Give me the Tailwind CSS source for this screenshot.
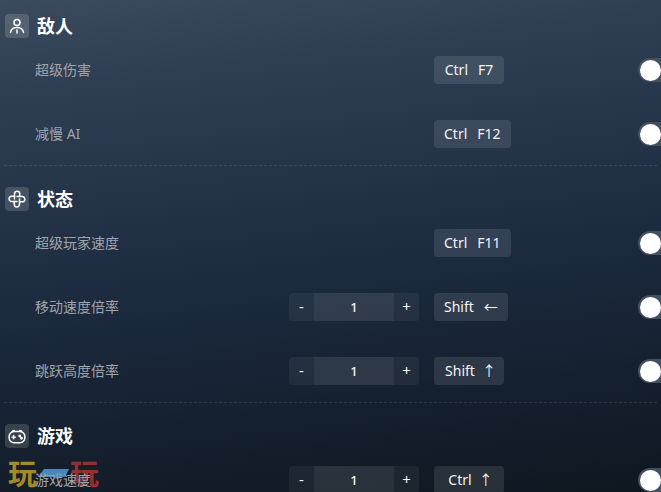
<!DOCTYPE html>
<html lang="zh">
<head>
<meta charset="UTF-8">
<title>Trainer</title>
<script src="https://cdn.jsdelivr.net/npm/@tailwindcss/browser@4"></script>
</head>
<body class="h-[492px] overflow-hidden bg-[linear-gradient(173deg,#3b4a5c_0%,#2b3b50_22%,#1c2a3f_55%,#0f1720_100%)] font-['Noto_Sans','Noto_Sans_CJK_SC',sans-serif]">
<div class="relative h-[492px] w-[661px] overflow-hidden pt-[14px]">

    <!-- watermark -->
    <div class="absolute left-[8px] top-[456px] flex items-center font-['Noto_Sans_CJK_SC',sans-serif] text-[29px] font-bold leading-[33px]">
        <span class="text-[#a68a25]">玩</span>
        <svg class="mx-px h-2 w-[31px]" viewBox="0 0 31 8"><polygon points="0,8 6,0 31,0 27,8" fill="#4a86b8"/></svg>
        <span class="text-[#93312f]">玩</span>
    </div>

    <!-- 敌人 -->
    <section class="relative">
        <div class="flex h-6 items-center gap-2 pl-[5px]">
            <span class="flex h-6 w-6 items-center justify-center rounded bg-white/15">
                <svg class="h-4 w-4" viewBox="0 0 16 16" fill="none" stroke="white" stroke-width="1.5" stroke-linecap="round">
                    <circle cx="8" cy="4.500" r="3"/>
                    <path d="M1.500 14.500C2 11 4.500 9.500 8 9.500s6 1.500 6.500 5M8 12v3"/>
                </svg>
            </span>
            <span class="text-lg font-bold leading-6 text-white">敌人</span>
        </div>
        <div class="flex h-16 items-center pl-[35px] text-sm text-[#a0a5ab]">
            <span class="flex-1">超级伤害</span>
            <div class="w-[204px] shrink-0"><span class="inline-flex h-7 min-w-[70px] items-center justify-center gap-2.5 rounded bg-white/10 px-2.5 text-sm text-gray-100"><span>Ctrl</span><span>F7</span></span></div>
            <span class="flex h-6 w-[23px] shrink-0 items-center rounded-l-full bg-[#44505f] pl-[2px]"><i class="h-[21px] w-[21px] shrink-0 rounded-full bg-white"></i></span>
        </div>
        <div class="flex h-16 items-center pl-[35px] text-sm text-[#a0a5ab]">
            <span class="flex-1">减慢 AI</span>
            <div class="w-[204px] shrink-0"><span class="inline-flex h-7 min-w-[70px] items-center justify-center gap-2.5 rounded bg-white/10 px-2.5 text-sm text-gray-100"><span>Ctrl</span><span>F12</span></span></div>
            <span class="flex h-6 w-[23px] shrink-0 items-center rounded-l-full bg-[#44505f] pl-[2px]"><i class="h-[21px] w-[21px] shrink-0 rounded-full bg-white"></i></span>
        </div>
    </section>

    <div class="mx-[4px] -mt-px border-t border-dashed border-white/10"></div>

    <!-- 状态 -->
    <section class="relative mt-[21px]">
        <div class="flex h-6 items-center gap-2 pl-[5px]">
            <span class="flex h-6 w-6 items-center justify-center rounded bg-white/15">
                <svg class="h-5 w-5" viewBox="0 0 16 16" fill="none" stroke="white" stroke-width="1.200" stroke-linecap="round">
                    <path d="M6 8V3.800a2.100 2.100 0 0 1 4.200 0V6"/>
                    <path transform="rotate(90 8 8)" d="M6 8V3.800a2.100 2.100 0 0 1 4.200 0V6"/>
                    <path transform="rotate(180 8 8)" d="M6 8V3.800a2.100 2.100 0 0 1 4.200 0V6"/>
                    <path transform="rotate(270 8 8)" d="M6 8V3.800a2.100 2.100 0 0 1 4.200 0V6"/>
                </svg>
            </span>
            <span class="text-lg font-bold leading-6 text-white">状态</span>
        </div>
        <div class="flex h-16 items-center pl-[35px] text-sm text-[#a0a5ab]">
            <span class="flex-1">超级玩家速度</span>
            <div class="w-[204px] shrink-0"><span class="inline-flex h-7 min-w-[70px] items-center justify-center gap-2.5 rounded bg-white/10 px-2.5 text-sm text-gray-100"><span>Ctrl</span><span>F11</span></span></div>
            <span class="flex h-6 w-[23px] shrink-0 items-center rounded-l-full bg-[#44505f] pl-[2px]"><i class="h-[21px] w-[21px] shrink-0 rounded-full bg-white"></i></span>
        </div>
        <div class="flex h-16 items-center pl-[35px] text-sm text-[#a0a5ab]">
            <span class="flex-1">移动速度倍率</span>
            <div class="mr-[15px] flex h-7 w-[130px] shrink-0 overflow-hidden rounded text-[15px] text-gray-100">
                <span class="flex w-[25px] items-center justify-center bg-white/5">-</span>
                <span class="flex w-20 items-center justify-center bg-white/10 text-[13px] font-medium">1</span>
                <span class="flex w-[25px] items-center justify-center bg-white/5">+</span>
            </div>
            <div class="w-[204px] shrink-0"><span class="inline-flex h-7 min-w-[70px] items-center justify-center gap-2.5 rounded bg-white/10 px-2.5 text-sm text-gray-100"><span>Shift</span><span class="flex w-[14px] justify-center">←</span></span></div>
            <span class="flex h-6 w-[23px] shrink-0 items-center rounded-l-full bg-[#44505f] pl-[2px]"><i class="h-[21px] w-[21px] shrink-0 rounded-full bg-white"></i></span>
        </div>
        <div class="flex h-16 items-center pl-[35px] text-sm text-[#a0a5ab]">
            <span class="flex-1">跳跃高度倍率</span>
            <div class="mr-[15px] flex h-7 w-[130px] shrink-0 overflow-hidden rounded text-[15px] text-gray-100">
                <span class="flex w-[25px] items-center justify-center bg-white/5">-</span>
                <span class="flex w-20 items-center justify-center bg-white/10 text-[13px] font-medium">1</span>
                <span class="flex w-[25px] items-center justify-center bg-white/5">+</span>
            </div>
            <div class="w-[204px] shrink-0"><span class="inline-flex h-7 min-w-[70px] items-center justify-center gap-2.5 rounded bg-white/10 px-2.5 text-sm text-gray-100"><span>Shift</span><span class="flex w-2 justify-center">↑</span></span></div>
            <span class="flex h-6 w-[23px] shrink-0 items-center rounded-l-full bg-[#44505f] pl-[2px]"><i class="h-[21px] w-[21px] shrink-0 rounded-full bg-white"></i></span>
        </div>
    </section>

    <div class="mx-[4px] -mt-px border-t border-dashed border-white/10"></div>

    <!-- 游戏 -->
    <section class="relative mt-[21px]">
        <div class="flex h-6 items-center gap-2 pl-[5px]">
            <span class="flex h-6 w-6 items-center justify-center rounded bg-white/15">
                <svg class="h-[18px] w-[18px]" viewBox="0 0 16 16" fill="none" stroke="white" stroke-width="1.300" stroke-linecap="round">
                    <rect x="1" y="4" width="14" height="10" rx="4.500"/>
                    <path d="M3.500 4.500c.3-1 1-1.500 2-1.500M12.500 4.500c-.3-1-1-1.500-2-1.500M3.500 9h3M5 7.500v3"/>
                    <circle cx="10.500" cy="8" r=".6" fill="white"/>
                    <circle cx="12" cy="10" r=".6" fill="white"/>
                </svg>
            </span>
            <span class="text-lg font-bold leading-6 text-white">游戏</span>
        </div>
        <div class="flex h-16 items-center pl-[35px] text-sm text-[#a0a5ab]">
            <span class="flex-1">游戏速度</span>
            <div class="mr-[15px] flex h-7 w-[130px] shrink-0 overflow-hidden rounded text-[15px] text-gray-100">
                <span class="flex w-[25px] items-center justify-center bg-white/5">-</span>
                <span class="flex w-20 items-center justify-center bg-white/10 text-[13px] font-medium">1</span>
                <span class="flex w-[25px] items-center justify-center bg-white/5">+</span>
            </div>
            <div class="w-[204px] shrink-0"><span class="inline-flex h-7 min-w-[70px] items-center justify-center gap-2.5 rounded bg-white/10 px-2.5 text-sm text-gray-100"><span>Ctrl</span><span class="flex w-2 justify-center">↑</span></span></div>
            <span class="flex h-6 w-[23px] shrink-0 items-center rounded-l-full bg-[#44505f] pl-[2px]"><i class="h-[21px] w-[21px] shrink-0 rounded-full bg-white"></i></span>
        </div>
    </section>

</div>
</body>
</html>
